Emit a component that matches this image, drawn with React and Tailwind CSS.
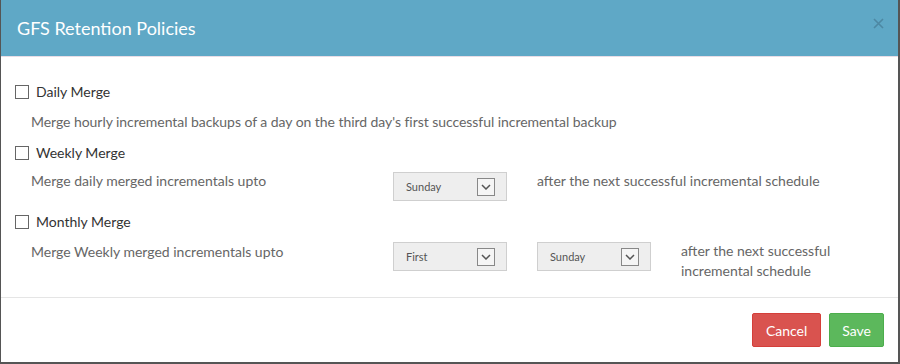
import React, { useState } from "react";

const Select = ({ value }) => (
  <div className="flex h-[29px] w-[114px] items-center justify-between border border-[#cfcfcf] bg-[#eeeeee] pl-[12px] pr-[11px] text-[11px] text-[#555]">
    <span>{value}</span>
    <span className="flex h-[18px] w-[18px] items-center justify-center border border-[#888] bg-[#f5f5f5]">
      <svg width="10" height="6" viewBox="0 0 10 6" fill="none">
        <path d="M1 1l4 4 4-4" stroke="#555" strokeWidth="1.5" />
      </svg>
    </span>
  </div>
);

const Check = ({ label, checked, onChange }) => (
  <label className="flex items-center gap-[7px] text-[14px] leading-[20px] text-[#333]">
    <span
      onClick={onChange}
      className={`h-[14px] w-[14px] border border-[#666] ${checked ? "bg-[#5fa8c6]" : "bg-white"}`}
    />
    {label}
  </label>
);

export default function App() {
  const [checks, setChecks] = useState({ daily: false, weekly: false, monthly: false });
  const toggle = k => setChecks({ ...checks, [k]: !checks[k] });

  return (
    <div className="h-[364px] w-[900px] bg-[#555] pb-[2px] pl-[1px] pr-[2px]" style={{ fontFamily: "Lato, 'Open Sans', sans-serif" }}>
      <div className="flex h-full flex-col bg-white">
        {/* header */}
        <div className="flex h-[57px] items-center justify-between border-b border-[#e8dde6] bg-[#5fa8c6] pl-[16px] pr-[14px]">
          <h2 className="text-[18px] text-white">GFS Retention Policies</h2>
          <svg className="mb-[10px]" width="11" height="11" viewBox="0 0 11 11">
            <path d="M1 1l9 9M10 1l-9 9" stroke="#4d88a3" strokeWidth="1.6" />
          </svg>
        </div>

        {/* body */}
        <div className="flex-1 border-b border-[#e5e5e5] pl-[14px] pt-[25px] text-[14px] leading-[20px] text-[#666]">
          <Check label="Daily Merge" checked={checks.daily} onChange={() => toggle("daily")} />
          <p className="mt-[10px] pl-[16px] tracking-[-0.05px]">
            Merge hourly incremental backups of a day on the third day's first successful incremental backup
          </p>

          <div className="mt-[11px]">
            <Check label="Weekly Merge" checked={checks.weekly} onChange={() => toggle("weekly")} />
          </div>
          <div className="mt-[9px] flex items-start">
            <span className="-mt-[1px] w-[378px] pl-[16px]">Merge daily merged incrementals upto</span>
            <Select value="Sunday" />
            <span className="-mt-[1px] ml-[30px]">after the next successful incremental schedule</span>
          </div>

          <div className="mt-[11px]">
            <Check label="Monthly Merge" checked={checks.monthly} onChange={() => toggle("monthly")} />
          </div>
          <div className="mt-[10px] flex items-start">
            <span className="w-[378px] pl-[16px]">Merge Weekly merged incrementals upto</span>
            <Select value="First" />
            <div className="ml-[30px]">
              <Select value="Sunday" />
            </div>
            <span className="-mt-[1px] ml-[30px] w-[170px]">after the next successful incremental schedule</span>
          </div>
        </div>

        {/* footer */}
        <div className="flex h-[64px] items-start justify-end gap-[8px] pr-[14px] pt-[15px]">
          <button className="h-[34px] rounded-[2px] border border-[#d43f3a] bg-[#d9534f] px-[13px] text-[14px] text-white">Cancel</button>
          <button className="h-[34px] rounded-[2px] border border-[#4cae4c] bg-[#5cb85c] px-[12px] text-[14px] text-white">Save</button>
        </div>
      </div>
    </div>
  );
}
